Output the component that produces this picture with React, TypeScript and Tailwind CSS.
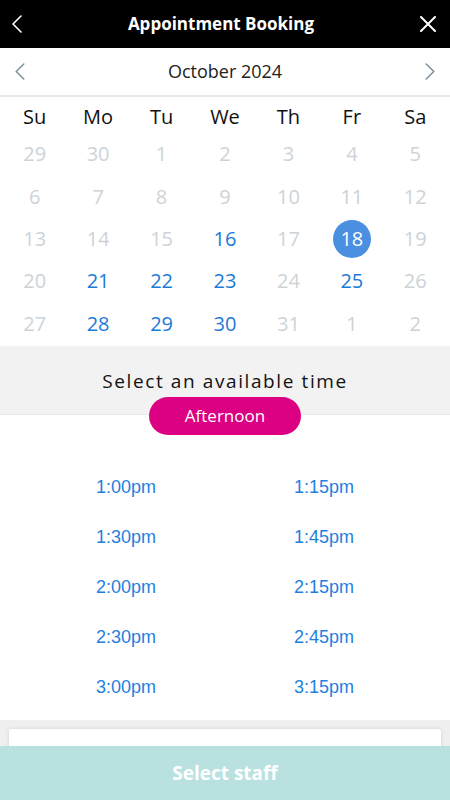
import React from "react";

const WEEKDAYS = ["Su", "Mo", "Tu", "We", "Th", "Fr", "Sa"];

// day number + whether it's bookable
const WEEKS: Array<Array<{ d: number; on?: boolean; sel?: boolean }>> = [
  [{ d: 29 }, { d: 30 }, { d: 1 }, { d: 2 }, { d: 3 }, { d: 4 }, { d: 5 }],
  [{ d: 6 }, { d: 7 }, { d: 8 }, { d: 9 }, { d: 10 }, { d: 11 }, { d: 12 }],
  [{ d: 13 }, { d: 14 }, { d: 15 }, { d: 16, on: true }, { d: 17 }, { d: 18, sel: true }, { d: 19 }],
  [{ d: 20 }, { d: 21, on: true }, { d: 22, on: true }, { d: 23, on: true }, { d: 24 }, { d: 25, on: true }, { d: 26 }],
  [{ d: 27 }, { d: 28, on: true }, { d: 29, on: true }, { d: 30, on: true }, { d: 31 }, { d: 1 }, { d: 2 }],
];

const SLOTS = [
  ["1:00pm", "1:15pm"],
  ["1:30pm", "1:45pm"],
  ["2:00pm", "2:15pm"],
  ["2:30pm", "2:45pm"],
  ["3:00pm", "3:15pm"],
];

function Chevron({ dir, className }: { dir: "left" | "right"; className?: string }) {
  return (
    <svg viewBox="0 0 10 18" className={className} fill="none" stroke="currentColor" strokeWidth={1.6} strokeLinecap="round" strokeLinejoin="round">
      {dir === "left" ? <path d="M9 1 1 9l8 8" /> : <path d="M1 1l8 8-8 8" />}
    </svg>
  );
}

export default function App() {
  return (
    <div className="relative w-[450px] h-[800px] overflow-hidden bg-white font-['Open_Sans',sans-serif]">
      {/* Header */}
      <div className="h-[48px] bg-black flex items-center justify-between px-3">
        <Chevron dir="left" className="w-[10px] h-[18px] text-white" />
        <h1 className="text-white text-[17px] font-bold">Appointment Booking</h1>
        <svg viewBox="0 0 16 16" className="w-[16px] h-[16px] mr-[2px] text-white" stroke="currentColor" strokeWidth={2} strokeLinecap="round">
          <path d="M1 1l14 14M15 1 1 15" />
        </svg>
      </div>

      {/* Month nav */}
      <div className="h-[49px] flex items-center justify-between px-[15px] border-b-2 border-[#e6e9ec]">
        <Chevron dir="left" className="w-[10px] h-[17px] text-[#7e8f99]" />
        <span className="text-[18px] text-[#222]">October 2024</span>
        <Chevron dir="right" className="w-[10px] h-[17px] text-[#7e8f99]" />
      </div>

      {/* Calendar */}
      <div className="grid grid-cols-7 px-[3px] pt-[5px]">
        {WEEKDAYS.map((w) => (
          <div key={w} className="h-[30px] flex items-center justify-center text-[20px] text-[#111]">
            {w}
          </div>
        ))}
      </div>
      <div className="grid grid-cols-7 px-[3px] pt-[1px]">
        {WEEKS.flat().map((c, i) => (
          <div key={i} className="h-[42.4px] flex items-center justify-center">
            {c.sel ? (
              <span className="w-[38px] h-[38px] rounded-full bg-[#4a8fe0] text-white text-[20px] flex items-center justify-center">
                {c.d}
              </span>
            ) : (
              <span className={`text-[20px] ${c.on ? "text-[#1c7ad8]" : "text-[#cdd3d7]"}`}>{c.d}</span>
            )}
          </div>
        ))}
      </div>

      {/* Time section header */}
      <div className="relative mt-[1px] h-[69px] bg-[#f2f2f2] border-b border-[#e8ebee] flex justify-center pt-[26px]">
        <span className="text-[19px] tracking-[1.6px] text-[#111] leading-none">Select an available time</span>
        <div className="absolute left-1/2 -translate-x-1/2 top-[51px] w-[152px] h-[38px] rounded-full bg-[#dc0082] flex items-center justify-center text-white text-[17px]">
          Afternoon
        </div>
      </div>

      {/* Slots */}
      <div className="pt-[47px] px-[27px] flex flex-col font-['Liberation_Sans',Arial,sans-serif]">
        {SLOTS.map((row) => (
          <div key={row[0]} className="h-[50px] flex">
            {row.map((t) => (
              <div key={t} className="flex-1 flex items-start justify-center text-[18px] text-[#1f7fe0] pt-[16px]">
                <span className="leading-none">{t}</span>
              </div>
            ))}
          </div>
        ))}
      </div>

      {/* Bottom area */}
      <div className="mt-[8px] h-[100px] bg-[#efefef] px-[9px] pt-[9px]">
        <div className="h-full bg-white rounded-[2px] shadow-[0_0_4px_rgba(0,0,0,0.12)]" />
      </div>

      <button className="absolute left-0 bottom-0 w-full h-[54px] bg-[#b9e1e0] text-white text-[19px] font-bold flex items-center justify-center">
        Select staff
      </button>
    </div>
  );
}
